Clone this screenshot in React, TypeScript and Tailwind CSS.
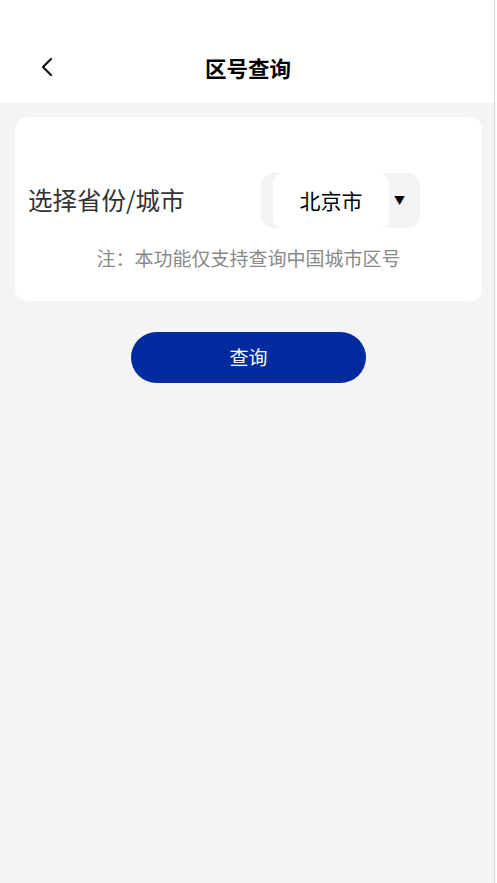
const FONT = { fontFamily: '"Noto Sans CJK SC", "Noto Sans", sans-serif' };

function BackIcon() {
  return (
    <svg width="12" height="20" viewBox="0 0 12 20" fill="none">
      <path d="M10 2 L2 10 L10 18" stroke="#111" strokeWidth="2.2" strokeLinecap="round" strokeLinejoin="round" />
    </svg>
  );
}

export default function App() {
  return (
    <div className="flex min-h-[883px] w-[497px] bg-white" style={FONT}>
      <div className="flex w-[495px] flex-col border-r border-gray-300 bg-[#f4f4f4]">
        {/* Header */}
        <header className="relative flex h-[103px] items-center justify-center bg-white pl-[2px] pt-[33px]">
          <button className="absolute left-[41px] top-[57px] flex h-[20px] w-[14px] items-center">
            <BackIcon />
          </button>
          <h1 className="text-[21.5px] font-bold text-black">区号查询</h1>
        </header>

        {/* Form card */}
        <div className="ml-[15px] mr-[12px] mt-[14px] flex h-[184px] flex-col rounded-[12px] bg-white px-[13px] pt-[56px]">
          <div className="flex h-[55px] items-center justify-between">
            <span className="text-[24.5px] text-[#333]">选择省份/城市</span>
            <div className="mr-[49px] flex h-[55px] w-[159px] items-center rounded-[12px] bg-[#f4f4f4] pl-[12px]">
              <div className="flex h-[55px] w-[116px] items-center justify-center rounded-[10px] bg-white text-[21px] text-black">
                北京市
              </div>
              <span className="ml-[5px] text-[11px] text-black">▼</span>
            </div>
          </div>
          <p className="mt-[16px] text-center text-[19px] text-[#888]">注：本功能仅支持查询中国城市区号</p>
        </div>

        {/* Submit */}
        <div className="mt-[31px] flex justify-center">
          <button className="ml-[3px] h-[51px] w-[235px] rounded-full bg-[#002a9e] text-[19px] text-white">查询</button>
        </div>
      </div>
    </div>
  );
}
